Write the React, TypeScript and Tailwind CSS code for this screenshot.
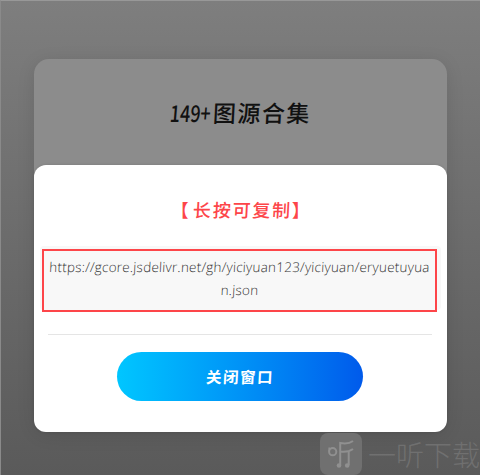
import React from 'react';

const urlLines = [
  'https://gcore.jsdelivr.net/gh/yiciyuan123/yiciyuan/eryuetuyua',
  'n.json',
];

const BrandIcon: React.FC = () => (
  <svg width="42" height="42" viewBox="0 0 42 42" fill="none" className="shrink-0">
    <rect width="42" height="42" rx="8" fill="#707070" />
    <g stroke="#909090" strokeWidth="2">
      <circle cx="12.7" cy="18.7" r="3.6" />
      <path d="M9.2 14.5V18.5" strokeWidth="1.6" />
      <path d="M20.2 32V10C24.5 10.8 29.5 10.6 33 8" />
      <path d="M20.2 18.5C24.5 19 29.5 18.5 33 16" />
      <path d="M28.7 18V32" />
    </g>
    <circle cx="19" cy="32.5" r="2.3" fill="#909090" />
    <circle cx="27.2" cy="32.5" r="2.3" fill="#909090" />
  </svg>
);

const App: React.FC = () => {
  return (
    <div className="relative h-[475px] w-[480px] overflow-hidden border-t border-l border-t-[#989898] border-l-[#8a8a8a] bg-linear-to-b from-[#7e7e7e] to-[#5a5a5a] pt-[58px] pl-[32.5px] font-['Liberation_Sans','Noto_Sans_CJK_SC',sans-serif]">
      <div className="w-[413.5px] rounded-[15px] bg-[#8c8c8c] shadow-[0_3px_18px_rgba(0,0,0,0.1)]">
        <div className="flex h-[106px] items-center justify-center pb-px text-[#111]">
          <h1 className="flex items-center font-['Noto_Sans_CJK_SC',sans-serif] font-medium">
            <span className="mr-[2px] inline-block w-[41px] origin-left scale-x-78 -skew-x-6 text-[23px] leading-8 whitespace-nowrap">149+</span>
            <span className="inline-block -skew-x-3 text-[23px] leading-8 tracking-[1.5px]">图源合集</span>
          </h1>
        </div>

        <div className="flex h-[267px] flex-col items-center rounded-[12px] bg-white shadow-[0_0_3px_rgba(0,0,0,0.12)]">
          <h2 className="mt-[28px] flex h-8 items-center font-['Noto_Sans_CJK_SC',sans-serif] text-[18px] font-medium text-[#fd4549]">
            <span className="-ml-[9px]">【</span>
            <span className="ml-[4px] -skew-x-3 tracking-[1.8px]">长按可复制</span>
            <span className="-mr-[9px]">】</span>
          </h2>

          <div className="mt-[21px] h-[64px] w-[401px] rounded-[4px] bg-[#f8f8f8] pt-[3px] pl-[2px]">
            <div className="h-[63px] w-[395px] border-2 border-[#fd4549] pt-[5px] text-center font-['Open_Sans',sans-serif] text-[13.5px] leading-[23px] font-light text-[#333]">
              {urlLines.map((line) => (
                <p key={line} className="-mx-2 -skew-x-3 tracking-[0.22px] whitespace-nowrap">{line}</p>
              ))}
            </div>
          </div>

          <div className="mt-[24px] h-px w-[384px] shrink-0 bg-[#e5e5e5]" />

          <button className="mt-[17px] flex h-[49px] w-[246px] shrink-0 items-center justify-center rounded-full bg-linear-to-r from-[#00c6ff] to-[#005aeb] font-['Noto_Sans_CJK_SC',sans-serif] text-[15.5px] font-bold text-white">
            <span className="-skew-x-3 tracking-[1.5px]">关闭窗口</span>
          </button>
        </div>
      </div>

      <div className="absolute top-[432px] left-[319px] flex items-center gap-[6px]">
        <BrandIcon />
        <span className="font-['Noto_Sans_CJK_SC',sans-serif] text-[28px] leading-[42px] font-light whitespace-nowrap text-[#707070]">
          一听下载
        </span>
      </div>
    </div>
  );
};

export default App;
